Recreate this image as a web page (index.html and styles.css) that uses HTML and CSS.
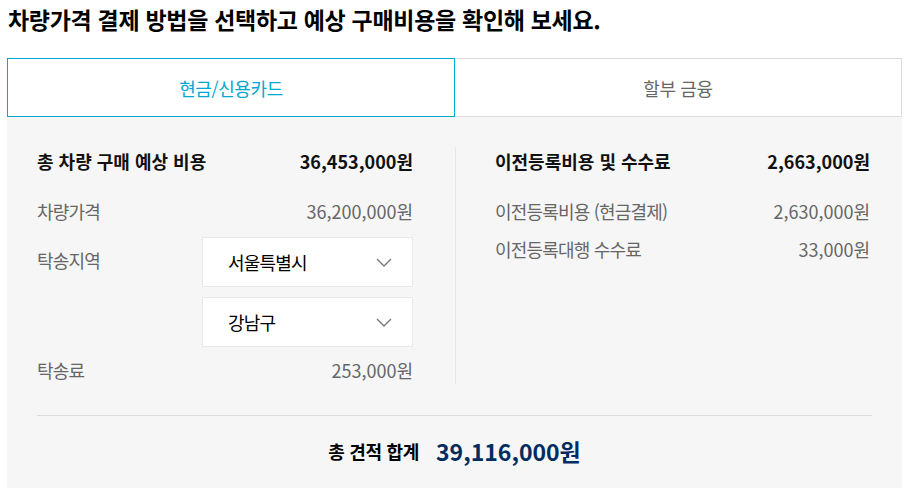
FILE: index.html
```html
<!DOCTYPE html>
<html lang="ko">
<head>
<meta charset="utf-8">
<link rel="stylesheet" href="styles.css">
</head>
<body>
<div class="wrap">
  <h1 class="title">차량가격 결제 방법을 선택하고 예상 구매비용을 확인해 보세요.</h1>
  <div class="tabs">
    <div class="tab active">현금/신용카드</div>
    <div class="tab">할부 금융</div>
  </div>
  <div class="panel">
    <div class="cols">
      <div class="col left">
        <div class="row head"><span>총 차량 구매 예상 비용</span><span class="num">36,453,000원</span></div>
        <div class="row item"><span>차량가격</span><span class="num">36,200,000원</span></div>
        <div class="region">
          <span class="label">탁송지역</span>
          <div class="selects">
            <div class="select"><span>서울특별시</span>
              <svg class="chev" width="16" height="9" viewBox="0 0 16 9"><path d="M1 1l7 7 7-7" fill="none" stroke="#777" stroke-width="1.3"/></svg>
            </div>
            <div class="select"><span>강남구</span>
              <svg class="chev" width="16" height="9" viewBox="0 0 16 9"><path d="M1 1l7 7 7-7" fill="none" stroke="#777" stroke-width="1.3"/></svg>
            </div>
          </div>
        </div>
        <div class="row item fee"><span>탁송료</span><span class="num">253,000원</span></div>
      </div>
      <div class="col right">
        <div class="row head"><span>이전등록비용 및 수수료</span><span class="num">2,663,000원</span></div>
        <div class="row item"><span>이전등록비용 (현금결제)</span><span class="num">2,630,000원</span></div>
        <div class="row item tight"><span>이전등록대행 수수료</span><span class="num">33,000원</span></div>
      </div>
    </div>
    <div class="total">
      <span class="total-label">총 견적 합계</span>
      <span class="total-value">39,116,000원</span>
    </div>
  </div>
</div>
</body>
</html>
```

FILE: styles.css
```css
* { box-sizing: border-box; }
html, body { margin: 0; padding: 0; background: #fff; }
body {
  font-family: "Noto Sans CJK KR", "Noto Sans", sans-serif;
  color: #111;
}
.wrap {
  width: 895px;
  margin-left: 7px;
}
.title {
  margin: 0;
  padding: 4px 0 0 1px;
  height: 58px;
  font-size: 23px;
  line-height: 30px;
  font-weight: 700;
  letter-spacing: -0.3px;
  color: #000;
}
.tabs {
  display: flex;
  height: 59px;
}
.tab {
  flex: 1;
  display: flex;
  align-items: center;
  justify-content: center;
  border: 1px solid #dcdcdc;
  border-left: none;
  font-size: 18px;
  color: #666;
  letter-spacing: -0.4px;
  background: #fff;
}
.tab.active {
  border: 1px solid #00a8d0;
  color: #00a8d0;
  flex: 0 0 448px;
}
.panel {
  background: #f6f6f6;
  padding: 30px 30px 0 30px;
  height: 371px;
}
.cols {
  display: flex;
}
.col.left {
  flex: 0 0 419px;
  padding-right: 42px;
  border-right: 1px solid #e6e6e6;
}
.col.right {
  flex: 1;
  padding-left: 39px;
  padding-right: 2px;
}
.row {
  display: flex;
  justify-content: space-between;
  align-items: center;
  height: 28px;
  font-size: 18px;
  letter-spacing: -0.8px;
}
.row .num { letter-spacing: 0; }
.row.head {
  font-weight: 700;
  color: #111;
  letter-spacing: 0;
}
.row.item {
  color: #666;
  margin-top: 22px;
}
.row.item.tight { margin-top: 10px; }
.row.item.fee { margin-top: 9px; }
.region {
  display: flex;
  justify-content: space-between;
  margin-top: 12px;
}
.region .label {
  font-size: 18px;
  color: #666;
  letter-spacing: -0.8px;
  line-height: 28px;
  margin-top: 9px;
}
.selects {
  width: 211px;
  display: flex;
  flex-direction: column;
  gap: 10px;
}
.select {
  height: 50px;
  background: #fff;
  border: 1px solid #e8e8e8;
  display: flex;
  align-items: center;
  justify-content: space-between;
  padding: 0 20px 0 25px;
  font-size: 18px;
  color: #000;
  letter-spacing: -0.8px;
}
.chev { display: block; margin-top: 1px; }
.total {
  margin-top: 31px;
  border-top: 1px solid #dcdcdc;
  display: flex;
  justify-content: center;
  align-items: center;
  gap: 17px;
  height: 72px;
  padding-bottom: 2px;
}
.total-label {
  font-size: 18px;
  font-weight: 700;
  color: #000;
  letter-spacing: -0.3px;
}
.total-value {
  font-size: 23px;
  font-weight: 700;
  color: #002c5f;
  letter-spacing: 0;
}
```
